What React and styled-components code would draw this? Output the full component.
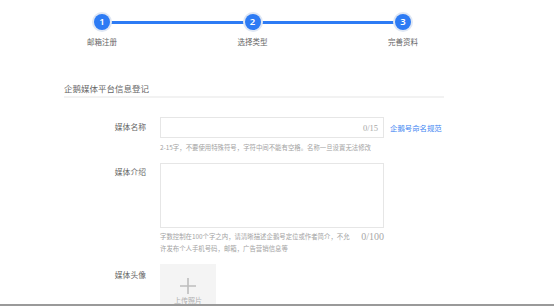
import React from "react";
import styled, { createGlobalStyle } from "styled-components";

const colors = {
  blue: "#2d7bf4",
  halo: "#dfe7f4",
  text: "#666",
  label: "#666",
  hint: "#a3a3a3",
  border: "#e6e6e6",
  link: "#3d85f2",
};

const GlobalStyle = createGlobalStyle`
  html, body {
    margin: 0;
    padding: 0;
    background: #fff;
  }
  body {
    font-family: "Noto Sans CJK SC", "Noto Sans", "Liberation Sans", sans-serif;
  }
`;

const Viewport = styled.div`
  height: 306px;
  box-sizing: border-box;
  border-bottom: 2px solid #9a9a9a;
  overflow: hidden;
  background: #fff;
`;

const Page = styled.div`
  padding: 12px 0 0 64px;
  width: 380px;
`;

const Steps = styled.div`
  display: flex;
  align-items: flex-start;
  width: 341px;
  margin-left: 18px;
`;

const Step = styled.div`
  width: 40px;
  display: flex;
  flex-direction: column;
  align-items: center;
  position: relative;
  z-index: 1;
`;

const Circle = styled.div`
  width: 16px;
  height: 16px;
  margin-top: 2px;
  border-radius: 50%;
  background: ${colors.blue};
  box-shadow: 0 0 0 2px ${colors.halo};
  color: #fff;
  font-family: "Noto Sans", "Liberation Sans", sans-serif;
  font-size: 9.5px;
  font-weight: 600;
  line-height: 16px;
  text-align: center;
`;

const StepLabel = styled.div`
  margin-top: 7px;
  font-size: 7.5px;
  line-height: 10px;
  color: ${colors.label};
  white-space: nowrap;
`;

const Connector = styled.div`
  flex: 1;
  height: 3px;
  margin: 8.5px -11px 0;
  background: ${colors.blue};
`;

const SectionTitle = styled.div`
  margin-top: 35px;
  font-size: 8.5px;
  line-height: 12px;
  color: ${colors.text};
  padding-bottom: 2px;
  border-bottom: 2px solid #f2f2f2;
`;

const FormRow = styled.div`
  display: grid;
  grid-template-columns: 96px 224px auto;
  align-items: start;
  margin-top: ${(p) => p.$top}px;
`;

const Label = styled.div`
  text-align: right;
  padding-right: 14px;
  padding-top: ${(p) => p.$pad}px;
  font-size: 7.8px;
  line-height: 12px;
  color: ${colors.label};
`;

const Field = styled.div`
  display: flex;
  flex-direction: column;
`;

const InputBox = styled.div`
  height: ${(p) => p.$h}px;
  box-sizing: border-box;
  border: 1px solid ${colors.border};
  background: #fff;
  display: flex;
  align-items: center;
  justify-content: flex-end;
  padding-right: 5px;
`;

const Counter = styled.span`
  font-family: "Liberation Serif", "DejaVu Serif", serif;
  font-size: ${(p) => p.$size}px;
  color: #a8a8a8;
`;

const Hint = styled.div`
  margin-top: 4px;
  font-size: 6.4px;
  line-height: 12px;
  color: ${colors.hint};
  white-space: nowrap;
`;

const HintRow = styled.div`
  display: flex;
  justify-content: space-between;
  align-items: flex-start;
  margin-top: 3px;
`;

const HintBlock = styled.div`
  width: 194px;
  font-size: 6.4px;
  line-height: 12px;
  color: ${colors.hint};
`;

const Link = styled.a`
  margin-left: 6px;
  padding-top: 5px;
  font-size: 7.4px;
  line-height: 12px;
  color: ${colors.link};
  text-decoration: none;
  white-space: nowrap;
`;

const Upload = styled.div`
  width: 56px;
  height: 56px;
  background: #f4f4f4;
  display: flex;
  flex-direction: column;
  align-items: center;
  padding-top: 13px;
  box-sizing: border-box;
`;

const UploadText = styled.div`
  margin-top: 1px;
  font-size: 7px;
  line-height: 9px;
  color: #b0b0b0;
`;

const Plus = () => (
  <svg width="18" height="18" viewBox="0 0 18 18">
    <path d="M9 1v16M1 9h16" stroke="#bdbdbd" strokeWidth="1.6" fill="none" />
  </svg>
);

export default function App() {
  const steps = ["邮箱注册", "选择类型", "完善资料"];
  return (
    <Viewport>
      <GlobalStyle />
      <Page>
        <Steps>
          {steps.map((s, i) => (
            <React.Fragment key={s}>
              {i > 0 && <Connector />}
              <Step>
                <Circle>{i + 1}</Circle>
                <StepLabel>{s}</StepLabel>
              </Step>
            </React.Fragment>
          ))}
        </Steps>

        <SectionTitle>企鹅媒体平台信息登记</SectionTitle>

        <FormRow $top={19}>
          <Label $pad={4}>媒体名称</Label>
          <Field>
            <InputBox $h={21}>
              <Counter $size={8.5}>0/15</Counter>
            </InputBox>
            <Hint>2-15字，不要使用特殊符号，字符中间不能有空格。名称一旦设置无法修改</Hint>
          </Field>
          <Link href="#rule">企鹅号命名规范</Link>
        </FormRow>

        <FormRow $top={9}>
          <Label $pad={3}>媒体介绍</Label>
          <Field>
            <InputBox $h={65} />
            <HintRow>
              <HintBlock>
                字数控制在100个字之内，请清晰描述企鹅号定位或作者简介，不允许发布个人手机号码，邮箱，广告营销信息等
              </HintBlock>
              <Counter $size={10}>0/100</Counter>
            </HintRow>
          </Field>
        </FormRow>

        <FormRow $top={9}>
          <Label $pad={5}>媒体头像</Label>
          <Field>
            <Upload>
              <Plus />
              <UploadText>上传照片</UploadText>
            </Upload>
          </Field>
        </FormRow>
      </Page>
    </Viewport>
  );
}
